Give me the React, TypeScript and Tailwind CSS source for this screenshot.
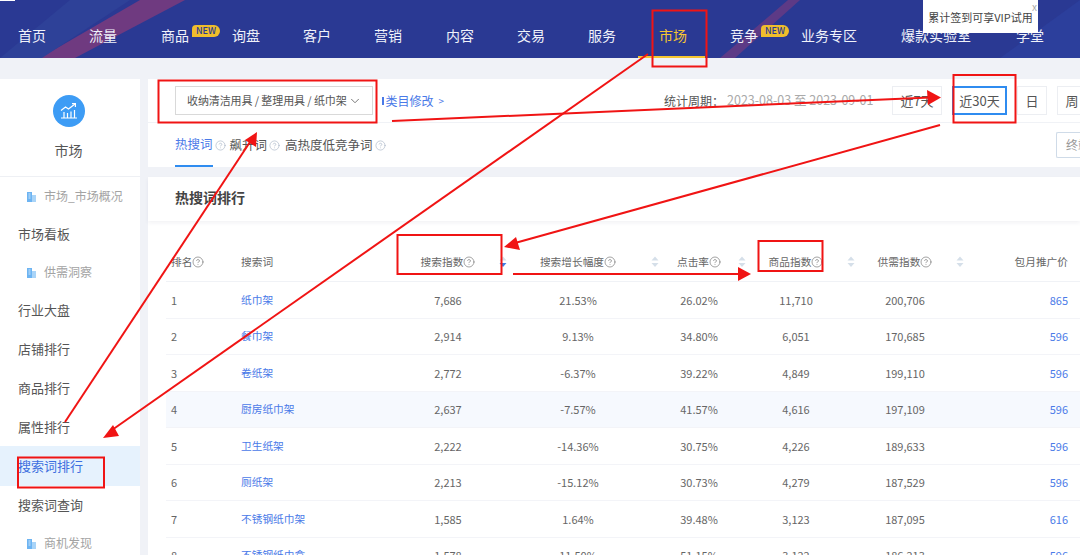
import React from "react";
import { CircleHelp, ChevronDown } from "lucide-react";

const navItems = [
  { label: "首页", w: "w-[71px]" },
  { label: "流量", w: "w-[72px]" },
  { label: "商品", w: "w-[71px]", isNew: true },
  { label: "询盘", w: "w-[71px]" },
  { label: "客户", w: "w-[71px]" },
  { label: "营销", w: "w-[72px]" },
  { label: "内容", w: "w-[71px]" },
  { label: "交易", w: "w-[71px]" },
  { label: "服务", w: "w-[71px]" },
  { label: "市场", w: "w-[71px]", active: true },
  { label: "竞争", w: "w-[71px]", isNew: true },
  { label: "业务专区", w: "w-[100px]" },
  { label: "爆款实验室", w: "w-[115px]" },
  { label: "学堂", w: "w-[60px]" },
];

const rows = [
  ["1", "纸巾架", "7,686", "21.53%", "26.02%", "11,710", "200,706", "865"],
  ["2", "餐巾架", "2,914", "9.13%", "34.80%", "6,051", "170,685", "596"],
  ["3", "卷纸架", "2,772", "-6.37%", "39.22%", "4,849", "199,110", "596"],
  ["4", "厨房纸巾架", "2,637", "-7.57%", "41.57%", "4,616", "197,109", "596"],
  ["5", "卫生纸架", "2,222", "-14.36%", "30.75%", "4,226", "189,633", "596"],
  ["6", "厕纸架", "2,213", "-15.12%", "30.73%", "4,279", "187,529", "596"],
  ["7", "不锈钢纸巾架", "1,585", "1.64%", "39.48%", "3,123", "187,095", "616"],
  ["8", "不锈钢纸巾盒", "1,578", "11.50%", "51.15%", "3,122", "186,213", "596"],
];

const tableCols = "grid grid-cols-[75px_150px_114px_146px_96px_98px_120px_103px]";

const SortIcon = ({ active }: { active?: boolean }) => (
  <svg width="8" height="12" viewBox="0 0 8 12" className="shrink-0">
    <path d="M4 0.500 7.500 4.500H0.500Z" fill="#d5dfe9" />
    <path d="M4 11 7.500 7H0.500Z" fill={active ? "#3d7fe8" : "#d5dfe9"} />
  </svg>
);

const HeadCell = ({
  label,
  active,
  sortClass,
}: {
  label: string;
  active?: boolean;
  sortClass: string;
}) => (
  <div className="grid grid-cols-[1fr_auto_1fr] items-center">
    <span />
    <span className="flex items-center">
      {label}
      <CircleHelp size={12} strokeWidth={1.2} className="text-[#666]" />
    </span>
    <span className={`justify-self-end ${sortClass}`}>
      <SortIcon active={active} />
    </span>
  </div>
);

const BuildingIcon = () => (
  <svg width="11" height="11" viewBox="0 0 11 11" className="shrink-0">
    <path d="M1 11V1h5v10Z" fill="#6db4f2" />
    <path d="M6 11V4h4v7Z" fill="#a9d4f8" />
    <path d="M2.500 3h2M2.500 5h2M2.500 7h2" stroke="#e8f4fe" strokeWidth="0.8" />
  </svg>
);

const SideSection = ({ label, className }: { label: string; className: string }) => (
  <div className={`flex items-center gap-[7px] pl-[26px] text-[12px] text-[#a3a3a3] ${className}`}>
    <BuildingIcon />
    {label}
  </div>
);

const SideItem = ({ label, className }: { label: string; className: string }) => (
  <div className={`flex items-center pl-[18px] text-[13px] text-[#555] ${className}`}>{label}</div>
);

export default function App() {
  return (
    <div
      className="relative h-[555px] w-[1080px] overflow-hidden bg-[#f0f2f7] text-[#555]"
      style={{ fontFamily: '"Noto Sans CJK SC", "Noto Sans", sans-serif' }}
    >
      {/* Header */}
      <header className="relative h-[58px] overflow-hidden bg-[#2a3993]">
        <svg className="absolute inset-0" width="1080" height="58" viewBox="0 0 1080 58">
          <path d="M40 58 140 0H185L75 58Z" fill="#6f3a80" />
          <path d="M0 58 70 0H130L42 58Z" fill="#2e4198" />
          <path d="M720 58 788 0H800L735 58Z" fill="#5d3a86" />
          <path d="M1000 58 1080 0V58Z" fill="#2c3f9c" />
        </svg>
        <nav className="relative flex h-full items-center pl-[18px] pt-[12px] text-[14px] text-[#f0f2fa]">
          {navItems.map((item) => (
            <div key={item.label} className={`relative flex shrink-0 items-center ${item.w}`}>
              <span className={item.active ? "text-[#f5c531]" : ""}>{item.label}</span>
              {item.isNew && (
                <span className="ml-[3px] mt-[-9px] rounded-[4px_6px_6px_0] bg-[#f0bd2c] px-[4px] text-[9px] leading-[12px] font-medium text-[#2a3993]">
                  NEW
                </span>
              )}
              {item.active && (
                <span className="absolute left-[-21px] top-[31px] h-[3px] w-[67px] bg-[#f5c531]" />
              )}
            </div>
          ))}
        </nav>
      </header>

      {/* Body */}
      <div className="flex gap-[8px] pt-[21px]">
        <aside className="h-[476px] w-[140px] shrink-0 bg-white">
          <div className="flex h-[98px] flex-col items-center border-b border-[#eef0f4] pr-[3px] pt-[16px]">
            <div className="flex h-[32px] w-[32px] items-center justify-center rounded-full bg-[#3d9cf5]">
              <svg width="20" height="20" viewBox="0 0 20 20" fill="none" stroke="#fff" strokeWidth="1.2">
                <path d="M2 9.500 6.500 6l3 2L16 3" />
                <path d="M13 2.600h3.400V6" />
                <path d="M2 17h16M5 17v-6M8.500 17v-5M12 17v-6.500M15.500 17v-8" />
              </svg>
            </div>
            <span className="mt-[13px] text-[14px] leading-[20px] text-[#555]">市场</span>
          </div>
          <SideSection label="市场_市场概况" className="h-[38px]" />
          <SideItem label="市场看板" className="h-[38px]" />
          <SideSection label="供需洞察" className="h-[38px]" />
          <SideItem label="行业大盘" className="h-[38px]" />
          <SideItem label="店铺排行" className="h-[39px]" />
          <SideItem label="商品排行" className="h-[39px]" />
          <SideItem label="属性排行" className="h-[39px]" />
          <SideItem label="搜索词排行" className="h-[40px] bg-[#e6f2fd] !text-[#3d6fe0]" />
          <SideItem label="搜索词查询" className="h-[38px]" />
          <SideSection label="商机发现" className="h-[38px]" />
        </aside>

        <main className="min-w-0 flex-1">
          {/* Filters */}
          <div className="bg-white">
            <div className="flex h-[44px] items-start border-b border-[#f0f2f6] pl-[27px] pt-[7px] whitespace-nowrap">
              <div className="flex h-[29px] w-[198px] shrink-0 items-center justify-between border border-[#d9d9d9] pl-[11px] pr-[10px] text-[11px] tracking-[-0.1px] text-[#555]">
                收纳清洁用具 / 整理用具 / 纸巾架
                <ChevronDown size={14} strokeWidth={1.5} className="text-[#666]" />
              </div>
              <a className="ml-[9px] flex h-[29px] w-[62px] shrink-0 items-center text-[12px] text-[#4a7ae8]">
                <span className="mr-[1px] h-[8px] w-[4px] border border-[#4a7ae8]" />
                类目修改
                <span className="ml-[5px] text-[10px]">&gt;</span>
              </a>
              <span className="ml-[220px] flex h-[29px] w-[210px] shrink-0 items-center text-[12px] text-[#555]">
                统计周期：<span className="ml-[3px] text-[12.5px] text-[#aaa]">2023-08-03 至 2023-09-01</span>
              </span>
              <div className="ml-[18px] flex h-[29px] shrink-0 items-center justify-center gap-[10px] text-[13px]">
                <span className="flex h-full w-[50px] items-center justify-center border border-[#eceef2]">近7天</span>
                <span className="flex h-full w-[55px] items-center justify-center border-2 border-[#2f8cf0]">近30天</span>
                <span className="flex h-full w-[30px] items-center justify-center border border-[#eceef2]">日</span>
                <span className="flex h-full w-[30px] items-center justify-center border border-[#eceef2]">周</span>
              </div>
            </div>
            <div className="flex h-[44px] items-start justify-between whitespace-nowrap pl-[27px]">
              <div className="flex text-[12.5px]">
                <span className="flex h-[44px] items-center gap-[2px]">
                  <span className="flex h-full items-center border-b-2 border-[#2f8cf0] text-[#4a7ae8]">热搜词</span>
                  <CircleHelp size={11} strokeWidth={1.2} className="text-[#9aa9bd]" />
                </span>
                <span className="ml-[4px] flex h-[44px] items-center gap-[2px]">
                  飙升词
                  <CircleHelp size={11} strokeWidth={1.2} className="text-[#9aa9bd]" />
                </span>
                <span className="ml-[5px] flex h-[44px] items-center gap-[2px]">
                  高热度低竞争词
                  <CircleHelp size={11} strokeWidth={1.2} className="text-[#9aa9bd]" />
                </span>
              </div>
              <div className="mt-[9px] flex h-[26px] w-[24px] items-center overflow-hidden rounded-l-[2px] border-y border-l border-[#cfdbe8] pl-[9px] text-[12px] text-[#999]">
                终端
              </div>
            </div>
          </div>

          {/* Title */}
          <div className="relative mt-[10px] flex h-[44px] items-center bg-white pb-[3px] pl-[27px] text-[14px] font-bold text-[#444] shadow-[0_2px_4px_rgba(30,40,80,0.06)]">
            热搜词排行
          </div>

          {/* Table */}
          <div className="h-[400px] bg-white pl-[18px]">
            <div className={`${tableCols} h-[61px] items-end border-b border-[#f0f2f6] pb-[11px] text-[10.7px] leading-[16px] text-[#666]`}>
              <span className="flex items-center pl-[5px]">
                排名
                <CircleHelp size={12} strokeWidth={1.2} />
              </span>
              <span>搜索词</span>
              <HeadCell label="搜索指数" active sortClass="mr-[-2px]" />
              <HeadCell label="搜索增长幅度" sortClass="mr-[-8px]" />
              <HeadCell label="点击率" sortClass="mr-[1px]" />
              <HeadCell label="商品指数" sortClass="mr-[-10px]" />
              <HeadCell label="供需指数" sortClass="mr-[1px]" />
              <span className="text-right">包月推广价</span>
            </div>
            {rows.map((row) => (
              <div
                key={row[0]}
                className={`${tableCols} h-[36.5px] items-center border-b border-[#f3f4f8] text-center text-[11px] text-[#666] ${
                  row[0] === "4" ? "bg-[#f6f9fe]" : ""
                }`}
              >
                <span className="pl-[5px] text-left">{row[0]}</span>
                <span className="text-left text-[10.7px] text-[#4a7ae8]">{row[1]}</span>
                <span>{row[2]}</span>
                <span>{row[3]}</span>
                <span>{row[4]}</span>
                <span>{row[5]}</span>
                <span>{row[6]}</span>
                <span className="text-right text-[#4a7ae8]">{row[7]}</span>
              </div>
            ))}
          </div>
        </main>
      </div>

      {/* Sign-in tooltip */}
      <div className="absolute left-[923px] top-0 flex h-[33px] w-[115px] items-center justify-center pt-[2px] bg-white text-[11px] text-[#444]">
        累计签到可享VIP试用
        <span className="absolute right-[1px] top-[1px] text-[10px] leading-[12px] text-[#aaa]">x</span>
      </div>
      <div className="absolute left-0 top-0 h-[1px] w-[15px] bg-white" />

      {/* Red annotations drawn on the screenshot */}
      <svg className="pointer-events-none absolute inset-0" width="1080" height="555" viewBox="0 0 1080 555" fill="none" stroke="#f01414" strokeWidth="2">
        <rect x="158.500" y="80.500" width="218" height="42" />
        <rect x="652.500" y="10.500" width="54" height="56" />
        <rect x="953.500" y="75" width="62" height="47.500" />
        <rect x="397.500" y="235" width="104" height="39" />
        <rect x="758.500" y="241" width="64" height="30" />
        <rect x="18" y="457.500" width="86" height="30" />
        <path d="M392 121 930 97.500" />
        <path d="M940 125 515 243" />
        <path d="M648 54 112 430" />
        <path d="M65 422 250 142" />
        <path d="M513 274H740" />
        <g fill="#f01414" stroke="none">
          <path d="M941 97.500 927 90 928 105Z" />
          <path d="M504 247 516 237 520 250Z" />
          <path d="M103 438 113 425 119 436Z" />
          <path d="M257 132 245 140 256 147Z" />
          <path d="M751 274 738 267V281Z" />
        </g>
      </svg>
    </div>
  );
}
